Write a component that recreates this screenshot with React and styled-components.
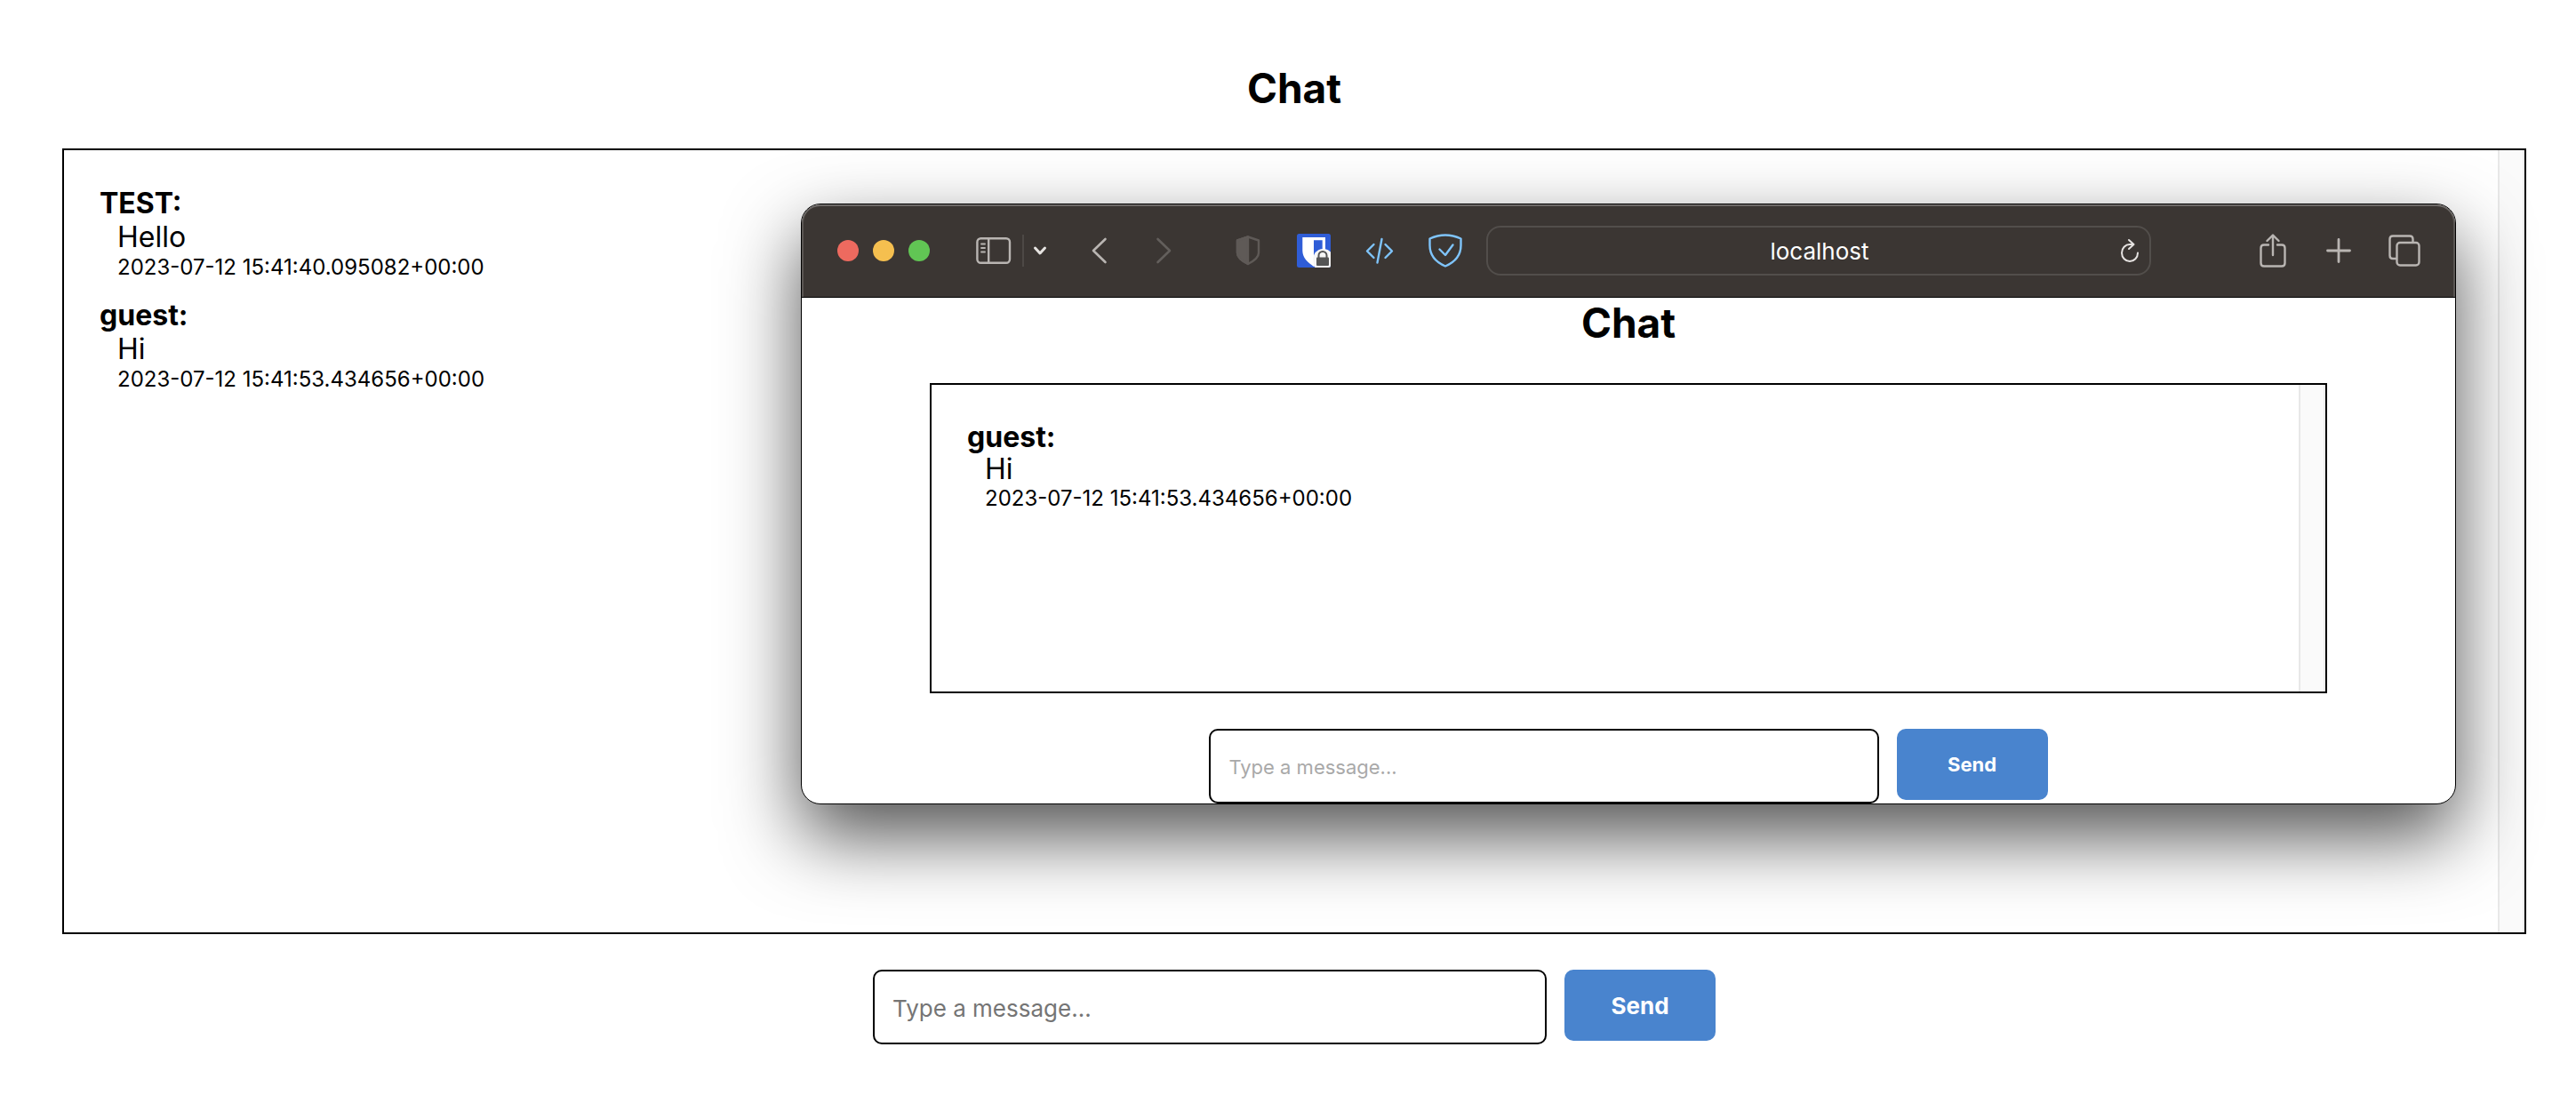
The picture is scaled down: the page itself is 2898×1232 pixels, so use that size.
import React from "react";
import styled, { createGlobalStyle } from "styled-components";

const Global = createGlobalStyle`
  * { box-sizing: border-box; }
  body {
    margin: 0;
    background: #fff;
    color: #000;
    font-family: Inter, "Liberation Sans", sans-serif;
  }
`;

const Page = styled.div`
  position: relative;
  display: flex;
  flex-direction: column;
  min-height: 100vh;
  padding: 71px 56px 0 70px;
  overflow: hidden;
`;

const Title = styled.h1`
  margin: 0;
  font-size: 46px;
  line-height: 56px;
  font-weight: 700;
  text-align: center;
`;

const MessageBox = styled.section`
  display: flex;
  margin-top: 40px;
  height: ${(p) => p.$height};
  border: 2px solid #000;
`;

const Messages = styled.ul`
  flex: 1;
  margin: 0;
  padding: 41px 40px;
  list-style: none;
  line-height: ${(p) => p.$leading};
`;

const ScrollTrack = styled.div`
  width: 30px;
  background: #fafafa;
  border-left: 2px solid #e8e8e8;
  border-right: 2px solid #ededed;
`;

const Message = styled.li`
  display: flex;
  flex-direction: column;
  margin-bottom: 20px;
`;

const Author = styled.strong`
  font-size: 32px;
  font-weight: 700;
`;

const Body = styled.span`
  padding-left: 20px;
  font-size: 32px;
`;

const Time = styled.time`
  padding-left: 20px;
  font-size: 24px;
  line-height: 30px;
`;

const Composer = styled.form`
  display: flex;
  align-items: flex-start;
  gap: 20px;
  width: ${(p) => p.$width};
  margin: 40px auto 0;
`;

const MessageInput = styled.input`
  flex: 1;
  min-width: 0;
  height: 84px;
  padding: 2px 20px 0;
  border: 2px solid #000;
  border-radius: 10px;
  background: #fff;
  font-family: inherit;
  font-size: ${(p) => p.$size};
  outline: none;
  &::placeholder {
    color: ${(p) => p.$hint};
    opacity: 1;
  }
`;

const SendButton = styled.button`
  width: 170px;
  height: 80px;
  padding: 0;
  border: 0;
  border-radius: 10px;
  background: #4984ce;
  color: #fff;
  font-family: inherit;
  font-size: ${(p) => p.$size};
  font-weight: 700;
`;

const Window = styled.div`
  position: absolute;
  top: 229px;
  left: 901px;
  right: 135px;
  height: 676px;
  display: flex;
  flex-direction: column;
  overflow: hidden;
  border: 1px solid #000;
  border-radius: 22px;
  background: #fff;
  box-shadow: 0 36px 84px rgba(0, 0, 0, 0.68);
`;

const Toolbar = styled.header`
  display: flex;
  align-items: center;
  height: 105px;
  flex: none;
  padding: 0 35px 0 40px;
  background: #3b3633;
  border-bottom: 1px solid #000;
  border-radius: 21px 21px 0 0;
  box-shadow: inset 0 2px 0 #6e6a68, inset 2px 0 0 #5a5653, inset -2px 0 0 #5a5653;
`;

const Lights = styled.div`
  display: flex;
  gap: 16px;
  margin-right: 50px;
`;

const Light = styled.button`
  width: 24px;
  height: 24px;
  padding: 0;
  border: 0;
  border-radius: 50%;
  background: ${(p) => p.$color};
`;

const ToolButton = styled.button`
  display: flex;
  align-items: center;
  justify-content: center;
  flex: none;
  width: ${(p) => p.$width || "44px"};
  height: 44px;
  padding: 0;
  border: 0;
  background: none;
  color: ${(p) => p.$color || "#b9b5b2"};
`;

const Divider = styled.span`
  width: 2px;
  height: 36px;
  margin-left: 10px;
  background: #4d4946;
`;

const Group = styled.div`
  display: flex;
  align-items: center;
  gap: ${(p) => p.$gap};
  margin-left: ${(p) => p.$space || 0};
`;

const Address = styled.div`
  display: flex;
  align-items: center;
  flex: 1;
  height: 56px;
  margin: 0 115px 0 24px;
  padding: 0 0 0 46px;
  border: 2px solid #524e4b;
  border-radius: 16px;
`;

const AddressInput = styled.input`
  flex: 1;
  min-width: 0;
  padding: 0;
  border: 0;
  outline: none;
  background: none;
  color: #fff;
  font-family: inherit;
  font-size: 26px;
  text-align: center;
`;

const Viewport = styled.main`
  flex: 1;
  padding: 0 144px;
  overflow: hidden;
`;

const Icon = ({ w, h, children, ...rest }) => (
  <svg width={w} height={h} viewBox={`0 0 ${w} ${h}`} fill="none" stroke="currentColor" strokeWidth="2.4" strokeLinecap="round" strokeLinejoin="round" aria-hidden="true" {...rest}>
    {children}
  </svg>
);

function Chat({ name, height, leading, messages, width, textSize, hint }) {
  return (
    <>
      <Title>Chat</Title>
      <MessageBox $height={height}>
        <Messages $leading={leading}>
          {messages.map((m) => (
            <Message key={m.time}>
              <Author>{m.author}:</Author>
              <Body>{m.body}</Body>
              <Time>{m.time}</Time>
            </Message>
          ))}
        </Messages>
        <ScrollTrack />
      </MessageBox>
      <Composer $width={width} onSubmit={(e) => e.preventDefault()}>
        <MessageInput id={name} aria-label="Message" placeholder="Type a message..." $size={textSize} $hint={hint} />
        <SendButton $size={textSize}>Send</SendButton>
      </Composer>
    </>
  );
}

function BrowserToolbar() {
  return (
    <Toolbar>
      <Lights>
        <Light $color="#ed6a5f" aria-label="Close" />
        <Light $color="#f5bf4f" aria-label="Minimize" />
        <Light $color="#61c554" aria-label="Zoom" />
      </Lights>
      <ToolButton aria-label="Sidebar">
        <Icon w={40} h={30}>
          <rect x="1.4" y="1.2" width="36.6" height="27.6" rx="4" />
          <path d="M14.2 1.5v27" />
          <path d="M6 7.5h4M6 12h4M6 16.5h4" strokeWidth="1.8" />
        </Icon>
      </ToolButton>
      <Divider />
      <ToolButton aria-label="Tab groups" $color="#e6e3e1" $width="36px">
        <Icon w={16} h={12} strokeWidth="3"><path d="M2.5 3L8 9l5.5-6" /></Icon>
      </ToolButton>
      <Group $gap="28px" $space="27px">
        <ToolButton aria-label="Back">
          <Icon w={18} h={30} strokeWidth="2.6"><path d="M15.5 2L2 15l13.5 13" /></Icon>
        </ToolButton>
        <ToolButton aria-label="Forward" $color="#635f5c">
          <Icon w={18} h={30} strokeWidth="2.6"><path d="M2.5 2L16 15 2.5 28" /></Icon>
        </ToolButton>
      </Group>
      <Group $gap="30px" $space="51px">
        <ToolButton aria-label="Privacy" $color="#5f5a57">
          <Icon w={28} h={34}>
            <path d="M14 1.5L26 5.5v14c0 5-5 9-12 12.5C7 28.5 2 24.5 2 19.5v-14z" />
            <path d="M14 1.5v30.5C7 28.5 2 24.5 2 19.5v-14z" fill="currentColor" />
          </Icon>
        </ToolButton>
        <ToolButton aria-label="Password manager">
          <Icon w={38} h={38} stroke="none">
            <rect width="38" height="38" rx="2.5" fill="#2f5dd7" />
            <path d="M6.3 4h25.7v15c0 8-6 13-13 18C12 32 6.3 27 6.3 19z" fill="#fff" />
            <path d="M19 7.2h9.7V20c0 4-4 8-9.7 12z" fill="#2f5dd7" />
            <path d="M38 20.5A11.5 11.5 0 0 0 18.5 31c0 2 .5 4.5 1.8 7H36q2 0 2-2z" fill="#f6f6f6" />
            <rect x="22" y="26.5" width="14" height="9.5" rx="1" fill="#555" />
            <path d="M24.5 27v-2.5a4.5 4.5 0 0 1 9 0V27" fill="none" stroke="#555" strokeWidth="2" />
          </Icon>
        </ToolButton>
        <ToolButton aria-label="Developer" $color="#7fc4fb">
          <Icon w={32} h={30}>
            <path d="M9.5 8L2 15.5l7.5 7.5M22.5 8l7.5 7.5-7.5 7.5M18.5 2l-5 26.5" />
          </Icon>
        </ToolButton>
        <ToolButton aria-label="Content blocker" $color="#7fc4fb">
          <Icon w={38} h={38}>
            <path d="M19 1.5c6 0 12 1.5 17.5 4v7.5c0 11-7 19-17.5 23.5C8.5 32 1.5 24 1.5 13V5.5C7 3 13 1.5 19 1.5z" />
            <path d="M12.5 17.5l6.5 6.5 8.5-11.5" />
          </Icon>
        </ToolButton>
      </Group>
      <Address>
        <AddressInput aria-label="Address" defaultValue="localhost" />
        <ToolButton aria-label="Reload" $color="#e6e3e1">
          <Icon w={22} h={28} strokeWidth="2">
            <path d="M15.5 7H11A9 9.5 0 1 0 20 16.5M10 2l5.5 5L10 12" />
          </Icon>
        </ToolButton>
      </Address>
      <Group $gap="30px">
        <ToolButton aria-label="Share">
          <Icon w={30} h={38}>
            <path d="M10 12.5H5q-3.5 0-3.5 3.5v17q0 3.5 3.5 3.5h20q3.5 0 3.5-3.5V16q0-3.5-3.5-3.5h-5M15 24V2M8.5 8L15 1.5 21.5 8" />
          </Icon>
        </ToolButton>
        <ToolButton aria-label="New tab">
          <Icon w={28} h={28} strokeWidth="2.8"><path d="M14 1.5v25M1.5 14h25" /></Icon>
        </ToolButton>
        <ToolButton aria-label="Tab overview">
          <Icon w={36} h={36}>
            <path d="M8.5 27H5q-3.5 0-3.5-3.5V5Q1.5 1.5 5 1.5h19Q27.5 1.5 27.5 5v3" />
            <rect x="9.5" y="9" width="25" height="25.5" rx="3.5" />
          </Icon>
        </ToolButton>
      </Group>
    </Toolbar>
  );
}

const hello = { author: "TEST", body: "Hello", time: "2023-07-12 15:41:40.095082+00:00" };
const hi = { author: "guest", body: "Hi", time: "2023-07-12 15:41:53.434656+00:00" };

export default function App() {
  return (
    <Page>
      <Global />
      <Chat name="host-message" height="884px" leading="38px" messages={[hello, hi]} width="948px" textSize="26px" hint="#757575" />
      <Window>
        <BrowserToolbar />
        <Viewport>
          <Chat name="guest-message" height="349px" leading="36px" messages={[hi]} width="60%" textSize="22px" hint="#a9a9a9" />
        </Viewport>
      </Window>
    </Page>
  );
}
